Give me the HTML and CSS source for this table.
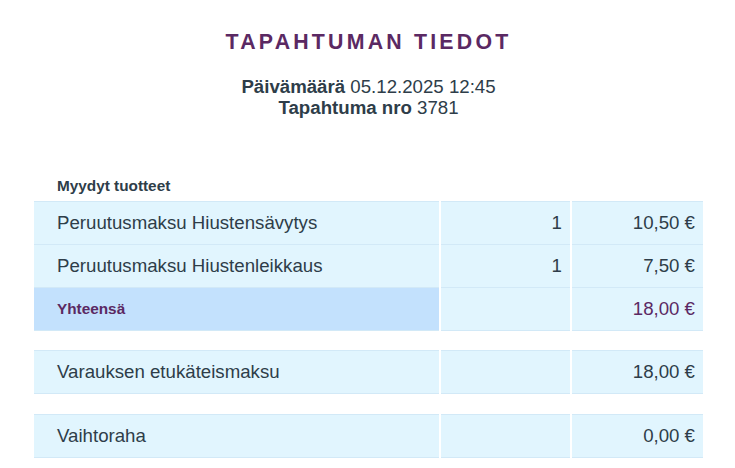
FILE: index.html
```html
<!DOCTYPE html>
<html lang="fi">
<head>
<meta charset="utf-8">
<link rel="stylesheet" href="styles.css">
</head>
<body>
<div class="page">
  <h1 class="title">TAPAHTUMAN TIEDOT</h1>
  <div class="meta">
    <div><b>Päivämäärä</b> 05.12.2025 12:45</div>
    <div><b>Tapahtuma nro</b> 3781</div>
  </div>
  <div class="section-label">Myydyt tuotteet</div>
  <table class="grid">
    <tbody>
      <tr><td class="name">Peruutusmaksu Hiustensävytys</td><td class="qty">1</td><td class="sum">10,50 €</td></tr>
      <tr><td class="name">Peruutusmaksu Hiustenleikkaus</td><td class="qty">1</td><td class="sum">7,50 €</td></tr>
      <tr class="total"><td class="name total-label">Yhteensä</td><td class="qty"></td><td class="sum">18,00 €</td></tr>
    </tbody>
  </table>
  <table class="grid sep">
    <tbody>
      <tr><td class="name">Varauksen etukäteismaksu</td><td class="qty"></td><td class="sum">18,00 €</td></tr>
    </tbody>
  </table>
  <table class="grid sep sep-last">
    <tbody>
      <tr><td class="name">Vaihtoraha</td><td class="qty"></td><td class="sum">0,00 €</td></tr>
    </tbody>
  </table>
</div>
</body>
</html>
```

FILE: styles.css
```css
html, body {
  margin: 0;
  padding: 0;
  background: #ffffff;
}
body {
  font-family: "Liberation Sans", Arial, sans-serif;
  color: #2e3d49;
}
.page {
  padding: 0 30px 0 32px;
}
.title {
  margin: 0;
  padding-top: 30px;
  text-align: center;
  font-size: 21.33px;
  line-height: 24px;
  letter-spacing: 3.2px;
  font-weight: bold;
  color: #5b2963;
}
.meta {
  margin-top: 22px;
  text-align: center;
  font-size: 18.67px;
  line-height: 21px;
}
.meta b {
  font-weight: bold;
}
.section-label {
  margin-top: 59px;
  padding-left: 25px;
  font-size: 15.33px;
  font-weight: bold;
  line-height: 18px;
  height: 24px;
}
.grid {
  width: 100%;
  border-collapse: separate;
  border-spacing: 2px 0;
  font-size: 18.67px;
}
.grid td {
  background: #e1f5fe;
  height: 43px;
  padding: 0 8px;
  border-bottom: 1px solid #d2e9f7;
  box-sizing: border-box;
}
.grid tr:first-child td {
  border-top: 1px solid #d2e9f7;
  height: 44px;
}
.grid .name {
  width: 405px;
  padding-left: 23px;
  text-align: left;
}
.grid .qty {
  width: 129px;
  text-align: right;
}
.grid .sum {
  text-align: right;
}
.grid .total td {
  color: #5b2963;
}
.grid .total .total-label {
  background: #c3e1fd;
  font-size: 15.33px;
  font-weight: bold;
}
.sep {
  margin-top: 19px;
}
.sep-last {
  margin-top: 20px;
}
```
